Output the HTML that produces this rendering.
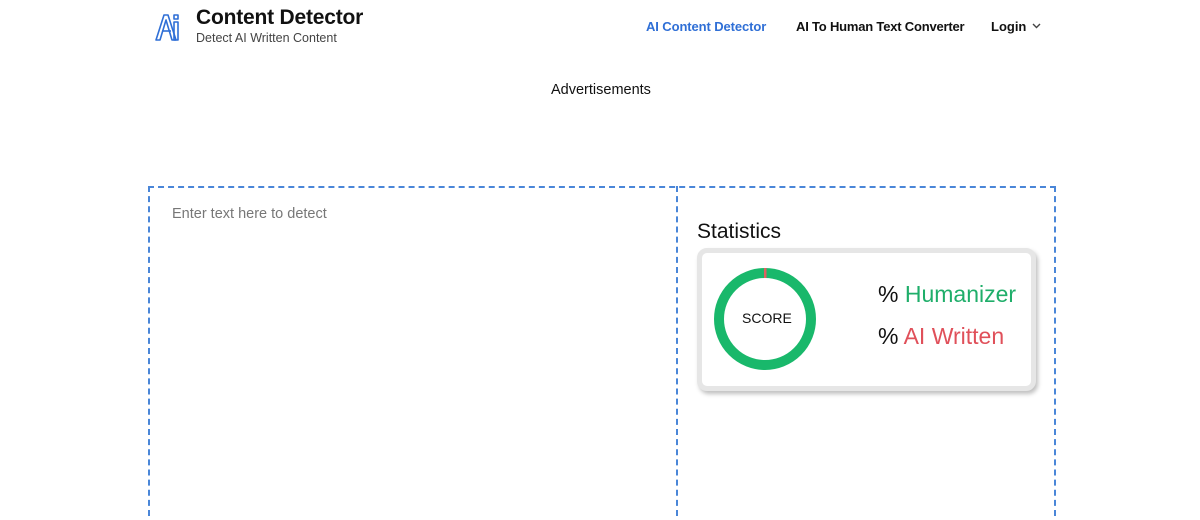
<!DOCTYPE html>
<html style="width:1200px;height:520px;overflow:hidden"><head><meta charset="utf-8"><style>
*{margin:0;padding:0;box-sizing:border-box}
body{width:1200px;height:520px;overflow:hidden;background:#fff;font-family:"Liberation Sans",sans-serif;color:#111;position:relative}
.abs{position:absolute;white-space:nowrap}
</style></head><body>
<svg class="abs" style="left:154px;top:12px" width="28" height="30" viewBox="0 0 28 30">
<g fill="none" stroke="#2f6fd6" stroke-width="1.6" stroke-linejoin="round">
<path d="M2 28 L10 3 L14 3 L22 28 L18 28 L12 8 L6 28 Z"/>
<path d="M8 19 L17 19"/>
<rect x="20" y="10" width="4" height="18"/>
<rect x="20" y="3" width="4" height="4"/>
</g></svg>
<div class="abs" style="left:196px;top:6px;font-size:21px;font-weight:bold;letter-spacing:-0.2px">Content Detector</div>
<div class="abs" style="left:196px;top:31px;font-size:12.5px;color:#444">Detect AI Written Content</div>
<div class="abs" style="left:646px;top:19px;font-size:13px;font-weight:bold;color:#2f6fd6;letter-spacing:-0.1px">AI Content Detector</div>
<div class="abs" style="left:796px;top:19px;font-size:13px;font-weight:bold;letter-spacing:-0.2px">AI To Human Text Converter</div>
<div class="abs" style="left:991px;top:19px;font-size:13px;font-weight:bold">Login</div>
<svg class="abs" style="left:1032px;top:23px" width="9" height="6" viewBox="0 0 9 6"><path d="M1 1 L4.5 4.5 L8 1" fill="none" stroke="#444" stroke-width="1.4"/></svg>
<div class="abs" style="left:551px;top:82px;font-size:14.5px">Advertisements</div>
<div class="abs" style="left:148px;top:186px;width:908px;height:330px;border:2px dashed #4a86d8;border-bottom:none"></div>
<div class="abs" style="left:676px;top:186px;height:330px;border-left:2px dashed #4a86d8"></div>
<div class="abs" style="left:172px;top:206px;font-size:14.5px;color:#777">Enter text here to detect</div>
<div class="abs" style="left:697px;top:220px;font-size:21px">Statistics</div>
<div class="abs" style="left:697px;top:248px;width:339px;height:143px;border:5px solid #e6e6e6;border-radius:10px;background:#fff;box-shadow:2px 3px 4px rgba(0,0,0,.25)"></div>
<svg class="abs" style="left:712px;top:266px" width="106" height="106" viewBox="0 0 106 106">
<circle cx="53" cy="53" r="46" fill="none" stroke="#19b86b" stroke-width="10"/>
<rect x="52" y="2" width="2.5" height="10" fill="#e06060"/>
</svg>
<div class="abs" style="left:742px;top:310px;font-size:14px">SCORE</div>
<div class="abs" style="left:878px;top:281px;font-size:23px"><span>%</span> <span style="color:#1fae6a">Humanizer</span></div>
<div class="abs" style="left:878px;top:323px;font-size:23px"><span>%</span> <span style="color:#e0505a">AI Written</span></div>
</body></html>
